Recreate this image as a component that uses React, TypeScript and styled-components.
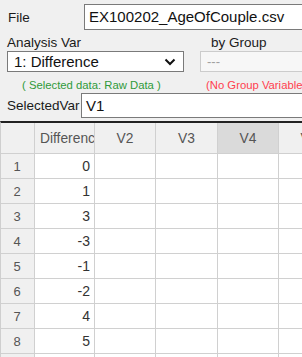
import React from "react";
import styled, { createGlobalStyle } from "styled-components";

const columns = [
  { name: "Difference", width: 60 },
  { name: "V2", width: 61 },
  { name: "V3", width: 62 },
  { name: "V4", width: 61, selected: true },
  { name: "V5", width: 61 },
];

const values = [0, 1, 3, -3, -1, -2, 4, 5, 2];

export default function App() {
  return (
    <>
      <GlobalStyle />
      <Page>
        <FileRow>
          <Label>File</Label>
          <TextBox>EX100202_AgeOfCouple.csv</TextBox>
        </FileRow>

        <VarSection>
          <LeftCol>
            <Label>Analysis Var</Label>
            <Select>
              <span>1: Difference</span>
              <svg width="12" height="8" viewBox="0 0 12 8">
                <path
                  d="M1.5 1.5 L6 6 L10.5 1.5"
                  fill="none"
                  stroke="#111"
                  strokeWidth="2"
                />
              </svg>
            </Select>
            <Note $color="#2f9a3a" $indent={15}>
              ( Selected data: Raw Data )
            </Note>
          </LeftCol>
          <RightCol>
            <Label $indent={11}>by Group</Label>
            <DisabledBox>---</DisabledBox>
            <Note $color="#ff3f4f" $indent={6}>
              (No Group Variable)
            </Note>
          </RightCol>
        </VarSection>

        <SelectedRow>
          <Label>SelectedVar</Label>
          <TextBox $small>V1</TextBox>
        </SelectedRow>

        <Grid>
          <HeaderCell $corner />
          {columns.map((col) => (
            <HeaderCell
              key={col.name}
              $selected={col.selected}
              $left={col.name === "Difference"}
            >
              {col.name}
            </HeaderCell>
          ))}
          {values.map((v, i) => (
            <React.Fragment key={i}>
              <RowHead>{i + 1}</RowHead>
              {columns.map((col, c) => (
                <Cell key={col.name}>{c === 0 ? v : ""}</Cell>
              ))}
            </React.Fragment>
          ))}
        </Grid>
      </Page>
    </>
  );
}

const GlobalStyle = createGlobalStyle`
  html, body {
    margin: 0;
    padding: 0;
    background: #f0f0f0;
    overflow: hidden;
  }
  body {
    font-family: "Liberation Sans", Arial, sans-serif;
    color: #1a1a1a;
  }
`;

const Page = styled.div`
  width: 302px;
  height: 357px;
  overflow: hidden;
  background: #f0f0f0;
`;

const Label = styled.div<{ $indent?: number }>`
  font-size: 13.5px;
  line-height: 16px;
  color: #1a1a1a;
  white-space: nowrap;
  padding-left: ${(p) => p.$indent ?? 0}px;
`;

const FileRow = styled.div`
  display: flex;
  align-items: center;
  padding: 4px 0 0 8px;

  ${Label} {
    width: 76px;
    flex-shrink: 0;
    padding-top: 2px;
  }
`;

const TextBox = styled.div<{ $small?: boolean }>`
  box-sizing: border-box;
  flex-shrink: 0;
  width: 240px;
  height: ${(p) => (p.$small ? 25 : 26)}px;
  border: 1px solid #7a7a7a;
  background: #fff;
  font-size: 15px;
  line-height: 24px;
  padding-left: 4px;
  color: #111;
  white-space: nowrap;
`;

const VarSection = styled.div`
  display: flex;
  gap: 16px;
  padding: 5px 0 0 7px;
`;

const LeftCol = styled.div`
  display: flex;
  flex-direction: column;
  width: 177px;
  flex-shrink: 0;
`;

const RightCol = styled.div`
  display: flex;
  flex-direction: column;
  width: 130px;
  flex-shrink: 0;
`;

const Select = styled.div`
  box-sizing: border-box;
  height: 21px;
  border: 1px solid #7a7a7a;
  background: #fff;
  display: flex;
  align-items: center;
  justify-content: space-between;
  padding: 0 7px 0 6px;
  font-size: 15px;
  color: #111;
`;

const DisabledBox = styled.div`
  box-sizing: border-box;
  height: 21px;
  border: 1px solid #cccccc;
  background: #f7f7f7;
  font-size: 13px;
  line-height: 19px;
  padding-left: 6px;
  color: #a0a0a0;
  white-space: nowrap;
`;

const Note = styled.div<{ $color: string; $indent: number }>`
  margin-top: 6px;
  padding-left: ${(p) => p.$indent}px;
  font-size: 11.3px;
  line-height: 14px;
  color: ${(p) => p.$color};
  white-space: nowrap;
`;

const SelectedRow = styled.div`
  display: flex;
  align-items: center;
  padding: 1px 0 0 7px;
  height: 25px;

  ${Label} {
    width: 74px;
    flex-shrink: 0;
  }
`;

const Grid = styled.div`
  margin-top: 3px;
  border-top: 2px solid #222;
  border-left: 1px solid #cfcfcf;
  background: #fff;
  display: grid;
  grid-template-columns: 34px 60px 61px 62px 61px 61px;
  grid-auto-rows: 25px;
  grid-template-rows: 31px;
  width: max-content;
`;

const HeaderCell = styled.div<{
  $selected?: boolean;
  $corner?: boolean;
  $left?: boolean;
}>`
  box-sizing: border-box;
  border-right: 1px solid #d0d0d0;
  border-bottom: 1px solid #d0d0d0;
  background: ${(p) => (p.$selected ? "#dadada" : "#f0f0f0")};
  color: #555;
  font-size: 13.8px;
  display: flex;
  align-items: flex-end;
  justify-content: ${(p) => (p.$left ? "flex-start" : "center")};
  padding: 0 0 7px ${(p) => (p.$left ? 5 : 0)}px;
  overflow: hidden;
  white-space: nowrap;
`;

const RowHead = styled.div`
  box-sizing: border-box;
  border-right: 1px solid #d0d0d0;
  border-bottom: 1px solid #d0d0d0;
  background: #f0f0f0;
  color: #555;
  font-size: 13px;
  display: flex;
  align-items: center;
  justify-content: center;
  padding-right: 1px;
`;

const Cell = styled.div`
  box-sizing: border-box;
  border-right: 1px solid #d0d0d0;
  border-bottom: 1px solid #d0d0d0;
  color: #333;
  font-size: 14px;
  display: flex;
  align-items: center;
  justify-content: flex-end;
  padding-right: 4px;
`;
